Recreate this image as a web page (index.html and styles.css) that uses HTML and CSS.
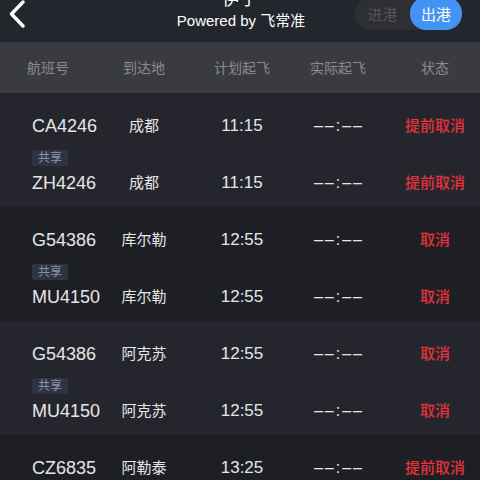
FILE: index.html
```html
<!DOCTYPE html>
<html lang="zh">
<head>
<meta charset="utf-8">
<link rel="stylesheet" href="styles.css">
</head>
<body>
<div class="topbar">
  <div class="back">
    <svg width="20" height="30" viewBox="0 0 20 30"><path d="M14 2 L2.5 14 L14 26" fill="none" stroke="#fff" stroke-width="3.4" stroke-linecap="round" stroke-linejoin="round"/></svg>
  </div>
  <div class="title">
    <div class="city">伊宁</div>
    <div class="powered">Powered by 飞常准</div>
  </div>
  <div class="toggle-wrap">
    <div class="toggle">
      <span class="opt">进港</span>
      <span class="opt active">出港</span>
    </div>
  </div>
</div>

<div class="thead">
  <div class="c1">航班号</div>
  <div class="c2">到达地</div>
  <div class="c3">计划起飞</div>
  <div class="c4">实际起飞</div>
  <div class="c5">状态</div>
</div>

<div class="group light">
  <div class="row">
    <div class="c1 fno">CA4246</div>
    <div class="c2 dest">成都</div>
    <div class="c3 time">11:15</div>
    <div class="c4 time dash">––:––</div>
    <div class="c5 status">提前取消</div>
  </div>
  <div class="share"><span class="badge">共享</span></div>
  <div class="row">
    <div class="c1 fno">ZH4246</div>
    <div class="c2 dest">成都</div>
    <div class="c3 time">11:15</div>
    <div class="c4 time dash">––:––</div>
    <div class="c5 status">提前取消</div>
  </div>
</div>

<div class="group dark">
  <div class="row">
    <div class="c1 fno">G54386</div>
    <div class="c2 dest">库尔勒</div>
    <div class="c3 time">12:55</div>
    <div class="c4 time dash">––:––</div>
    <div class="c5 status">取消</div>
  </div>
  <div class="share"><span class="badge">共享</span></div>
  <div class="row">
    <div class="c1 fno">MU4150</div>
    <div class="c2 dest">库尔勒</div>
    <div class="c3 time">12:55</div>
    <div class="c4 time dash">––:––</div>
    <div class="c5 status">取消</div>
  </div>
</div>

<div class="group light">
  <div class="row">
    <div class="c1 fno">G54386</div>
    <div class="c2 dest">阿克苏</div>
    <div class="c3 time">12:55</div>
    <div class="c4 time dash">––:––</div>
    <div class="c5 status">取消</div>
  </div>
  <div class="share"><span class="badge">共享</span></div>
  <div class="row">
    <div class="c1 fno">MU4150</div>
    <div class="c2 dest">阿克苏</div>
    <div class="c3 time">12:55</div>
    <div class="c4 time dash">––:––</div>
    <div class="c5 status">取消</div>
  </div>
</div>

<div class="group dark">
  <div class="row">
    <div class="c1 fno">CZ6835</div>
    <div class="c2 dest">阿勒泰</div>
    <div class="c3 time">13:25</div>
    <div class="c4 time dash">––:––</div>
    <div class="c5 status">提前取消</div>
  </div>
</div>
</body>
</html>
```

FILE: styles.css
```css
html, body {
  margin: 0;
  padding: 0;
}
body {
  width: 480px;
  height: 480px;
  overflow: hidden;
  background: #1e1f24;
  font-family: "Liberation Sans", "Noto Sans CJK SC", sans-serif;
  color: #e8e8ea;
}
.topbar {
  height: 42px;
  background: #24262e;
  display: grid;
  grid-template-columns: 1fr auto 1fr;
  align-items: start;
  overflow: hidden;
}
.back {
  padding-left: 9px;
  padding-top: 0;
  height: 30px;
  display: flex;
  align-items: flex-start;
}
.back svg { display: block; }
.title {
  margin-top: -13px;
  display: flex;
  flex-direction: column;
  align-items: center;
  color: #fff;
}
.city {
  font-size: 18px;
  line-height: 24px;
}
.powered {
  font-size: 15px;
  line-height: 20px;
  padding-left: 2px;
}
.toggle-wrap {
  display: flex;
  justify-content: flex-end;
  padding-right: 18px;
}
.toggle {
  margin-top: -3px;
  height: 33px;
  width: 107px;
  border-radius: 16px;
  background: #2e2f34;
  display: flex;
  align-items: stretch;
  box-sizing: border-box;
}
.opt {
  flex: 1;
  display: flex;
  align-items: center;
  justify-content: center;
  font-size: 15px;
  line-height: 20px;
  color: #55565b;
  padding-top: 2px;
  border-radius: 16px;
}
.opt.active {
  flex: 0 0 52px;
  background: #4393f6;
  color: #fff;
}
.thead, .row {
  display: grid;
  grid-template-columns: 96px 96px 100px 92px 96px;
  align-items: center;
  text-align: center;
}
.thead {
  height: 51px;
  line-height: 20px;
  background: #3a3b40;
  color: #8a8b90;
  font-size: 14px;
}
.c5 { padding-left: 6px; }
.group {
  height: 114px;
  box-sizing: border-box;
  padding-top: 19px;
}
.group.light { background: #25262d; }
.group.dark { background: #1e1f24; }
.row {
  height: 28px;
  line-height: 28px;
  white-space: nowrap;
}
.fno {
  text-align: left;
  padding-left: 32px;
  font-size: 18px;
  color: #e6e6e8;
}
.thead .c1 {
  text-align: center;
  padding-left: 0;
}
.dest {
  font-size: 15px;
  color: #e6e6e8;
}
.time {
  font-size: 17px;
  color: #e6e6e8;
}
.dash {
  letter-spacing: 2px;
  font-size: 16px;
  padding-left: 2px;
}
.status {
  font-size: 15px;
  font-weight: 500;
  color: #e8323c;
}
.share {
  margin-top: 10px;
  margin-bottom: 3px;
  padding-left: 32px;
  height: 16px;
  display: flex;
}
.badge {
  background: #2f3445;
  color: #8d94a7;
  font-size: 12px;
  line-height: 16px;
  padding: 0 6px;
  border-radius: 2px;
}
```
